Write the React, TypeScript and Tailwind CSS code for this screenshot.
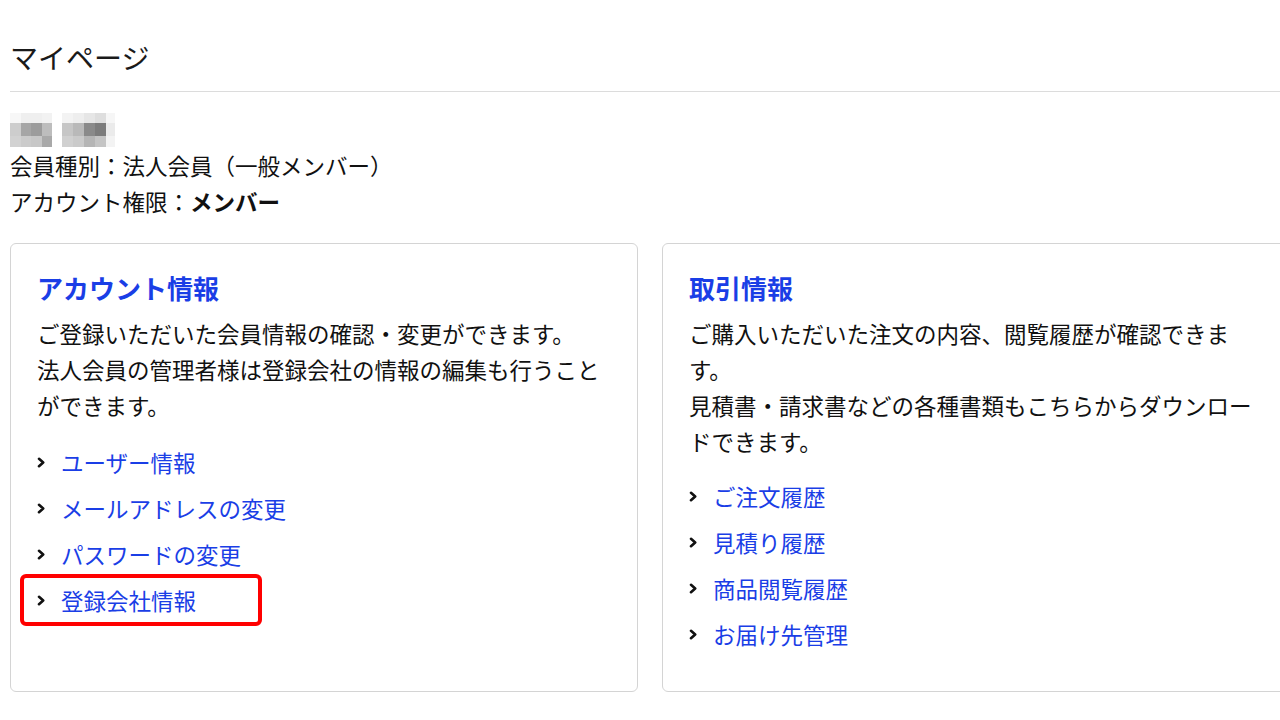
import React from "react";

const blurA = [
  ["#f7f7f7", "#efefef", "#efefef", "#f2f2f2"],
  ["#cdcdcd", "#a6a6a6", "#9c9c9c", "#bdbdbd"],
  ["#d2d2d2", "#cbcbcb", "#c7c7c7", "#a9a9a9"],
];
const blurB = [
  ["#f3f3f3", "#eeeeee", "#e6e6e6", "#dedede", "#f6f6f6"],
  ["#c6c6c6", "#b9b9b9", "#8a8a8a", "#7c7c7c", "#ebebeb"],
  ["#d0d0d0", "#cacaca", "#b5b5b5", "#c4c4c4", "#f3f3f3"],
];

function Blur() {
  return (
    <div className="flex h-[34px] mt-[21px] gap-[10px]">
      <div className="grid grid-cols-[11px_10px_11px_10px] grid-rows-[10px_13px_11px]">
        {blurA.flat().map((c, i) => (
          <div key={i} style={{ background: c }} />
        ))}
      </div>
      <div className="grid grid-cols-[11px_11px_11px_11px_9px] grid-rows-[10px_13px_11px]">
        {blurB.flat().map((c, i) => (
          <div key={i} style={{ background: c }} />
        ))}
      </div>
    </div>
  );
}

function Chevron() {
  return (
    <svg width="9" height="11" viewBox="0 0 9 11" className="block">
      <polyline points="2,1.8 6.2,5.5 2,9.2" fill="none" stroke="#111" strokeWidth="2.6" strokeLinecap="round" strokeLinejoin="round" />
    </svg>
  );
}

function LinkRow({ label, highlight }: { label: string; highlight?: boolean }) {
  return (
    <li className="relative flex items-center h-[46px]">
      <span className="w-[24px] flex items-center">
        <Chevron />
      </span>
      <a className="text-[#1a3ee6] text-[22.5px] leading-[36px]" href="#">
        {label}
      </a>
      {highlight && (
        <div className="absolute left-[-17px] top-[-3px] w-[242px] h-[52px] border-[4px] border-[#ff0000] rounded-[6px]" />
      )}
    </li>
  );
}

function Card({
  title,
  lines,
  links,
  highlightLast,
  tight,
}: {
  title: string;
  lines: string[];
  links: string[];
  highlightLast?: boolean;
  tight?: boolean;
}) {
  return (
    <div
      className={
        tight
          ? "border border-[#d4d4d4] rounded-[6px] pt-[25px] pb-[34px] px-[26px] bg-white"
          : "border border-[#d4d4d4] rounded-[6px] pt-[25px] pb-[32px] px-[26px] bg-white"
      }
    >
      <h2 className="text-[26px] leading-[38px] font-bold text-[#1a3ee6]">{title}</h2>
      <div className="mt-[8px] text-[22.5px] leading-[36px] text-[#111]">
        {lines.map((l, i) => (
          <p key={i}>{l}</p>
        ))}
      </div>
      <ul className={tight ? "mt-[14px]" : "mt-[16px]"}>
        {links.map((l, i) => (
          <LinkRow key={i} label={l} highlight={highlightLast && i === links.length - 1} />
        ))}
      </ul>
    </div>
  );
}

export default function App() {
  return (
    <div
      className="w-[1280px] h-[720px] overflow-hidden bg-white pl-[10px] text-[#111]"
      style={{ fontFamily: '"Noto Sans CJK JP", "Noto Sans", sans-serif' }}
    >
      <div className="w-[1290px]">
        <h1 className="pt-[36px] text-[28px] leading-[42px] font-normal text-[#1a1a1a]">マイページ</h1>
        <div className="mt-[13px] border-t border-[#dcdcdc]" />
        <Blur />
        <div className="text-[22.5px] leading-[36px]">
          <p>会員種別：法人会員（一般メンバー）</p>
          <p>
            アカウント権限：<span className="font-bold">メンバー</span>
          </p>
        </div>
        <div className="mt-[24px] grid grid-cols-[628px_628px] gap-[24px]">
          <Card
            title="アカウント情報"
            lines={[
              "ご登録いただいた会員情報の確認・変更ができます。",
              "法人会員の管理者様は登録会社の情報の編集も行うことができます。",
            ]}
            links={["ユーザー情報", "メールアドレスの変更", "パスワードの変更", "登録会社情報"]}
            highlightLast
          />
          <Card
            title="取引情報"
            lines={[
              "ご購入いただいた注文の内容、閲覧履歴が確認できます。",
              "見積書・請求書などの各種書類もこちらからダウンロードできます。",
            ]}
            links={["ご注文履歴", "見積り履歴", "商品閲覧履歴", "お届け先管理"]}
            tight
          />
        </div>
      </div>
    </div>
  );
}
